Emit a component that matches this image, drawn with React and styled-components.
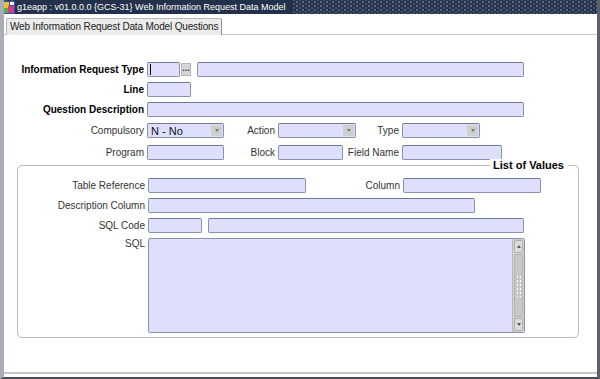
import React from 'react';
import styled, { createGlobalStyle } from 'styled-components';

const GlobalStyle = createGlobalStyle`
  body {
    margin: 0;
    background: #ffffff;
    font-family: "Liberation Sans", Arial, sans-serif;
    font-size: 10px;
    color: #000;
  }
`;

// Window frame
const Window = styled.div`
  width: 600px;
  height: 379px;
  box-sizing: border-box;
  display: flex;
  flex-direction: column;
  background: #fff;
  border-left: 4px solid #a9adb6;
  border-right: 3px solid #5d6068;
  border-bottom: 2px solid #4a4d55;
  overflow: hidden;
`;

const TitleBar = styled.div`
  height: 14px;
  margin-left: -4px;
  margin-right: -3px;
  display: flex;
  align-items: center;
  background-color: #23314a;
  background-image:
    radial-gradient(circle, #5f6f88 0.7px, transparent 0.9px),
    radial-gradient(circle, #4b5a72 0.7px, transparent 0.9px);
  background-size: 6px 4px, 6px 4px;
  background-position: 0 0, 3px 2px;
`;

const TitleText = styled.span`
  background: #23314a;
  color: #ffffff;
  font-size: 9px;
  line-height: 14px;
  padding: 0 6px 0 2px;
  white-space: nowrap;
`;

const AppIcon = styled.svg`
  width: 13px;
  height: 13px;
  margin-left: 2px;
  flex: none;
`;

const TabStrip = styled.div`
  height: 20px;
  display: flex;
  align-items: flex-end;
  padding-left: 2px;
  border-bottom: 1px solid #c9c9c9;
`;

const Tab = styled.div`
  height: 16px;
  line-height: 16px;
  padding: 0 3px 0 3px;
  background: #ececec;
  border: 1px solid #b8b8b8;
  border-bottom: none;
  border-right: 1px solid #8e8e8e;
  font-size: 10px;
  letter-spacing: -0.15px;
  color: #222;
  margin-bottom: -1px;
  border-radius: 2px 2px 0 0;
`;

const Panel = styled.div`
  flex: 1;
  display: flex;
  flex-direction: column;
  padding-top: 27px;
  border-bottom: 2px solid #c6c6c6;
  margin-bottom: 3px;
`;

const Row = styled.div`
  display: flex;
  align-items: center;
  height: 15px;
  margin-top: ${(p) => p.$mt || 0}px;
`;

const Label = styled.span`
  width: ${(p) => p.$w}px;
  flex: none;
  text-align: right;
  padding-right: 3px;
  box-sizing: border-box;
  font-weight: ${(p) => (p.$bold ? 'bold' : 'normal')};
  color: ${(p) => (p.$bold ? '#000' : '#333')};
  white-space: nowrap;
`;

const Field = styled.div`
  width: ${(p) => p.$w}px;
  height: 15px;
  flex: none;
  box-sizing: border-box;
  margin-left: ${(p) => p.$ml || 0}px;
  background: #dedffb;
  border: 1px solid #8a93ad;
  border-top-color: #6f7a96;
  border-radius: 2px;
  display: flex;
  align-items: center;
  font-size: 11px;
  padding-left: 3px;
  color: #111;
  position: relative;
`;

const Caret = styled.span`
  width: 1px;
  height: 11px;
  background: #000;
  margin-left: -1px;
`;

const LovButton = styled.div`
  width: 10px;
  height: 13px;
  margin-left: 1px;
  background: #d6d6d6;
  border: 1px solid #b4b4b4;
  box-sizing: border-box;
  font-size: 9px;
  line-height: 8px;
  text-align: center;
  font-weight: bold;
  color: #333;
`;

const DropButton = styled.div`
  position: absolute;
  right: 1px;
  top: 1px;
  width: 11px;
  height: 11px;
  background: #cfcfcf;
  border-radius: 1px;
  display: flex;
  align-items: center;
  justify-content: center;
  &::after {
    content: '';
    border-left: 2.5px solid transparent;
    border-right: 2.5px solid transparent;
    border-top: 3px solid #777;
  }
`;

const GroupBox = styled.div`
  position: relative;
  margin: 5px 18px 0 13px;
  height: 173px;
  box-sizing: border-box;
  border: 1px solid #bcbcbc;
  border-radius: 5px;
  padding-top: 12px;
  display: flex;
  flex-direction: column;
`;

const Legend = styled.span`
  position: absolute;
  top: -7px;
  right: 10px;
  background: #fff;
  padding: 0 4px 0 3px;
  font-weight: bold;
  font-size: 11px;
  line-height: 12px;
`;

const SqlRow = styled.div`
  display: flex;
  align-items: flex-start;
  margin-top: 5px;
`;

const SqlArea = styled.div`
  width: 377px;
  height: 95px;
  box-sizing: border-box;
  background: #dedffb;
  border: 1px solid #8a93ad;
  border-radius: 2px;
  display: flex;
  justify-content: flex-end;
`;

const ScrollBar = styled.div`
  width: 12px;
  display: flex;
  flex-direction: column;
  background: #d2d2d2;
  border-left: 1px solid #b9b9b9;
  padding: 1px 0;
  box-sizing: border-box;
`;

const ScrollBtn = styled.div`
  height: 11px;
  display: flex;
  align-items: center;
  justify-content: center;
  background: #dcdcdc;
  border: 1px solid #b0b0b0;
  border-radius: 2px;
  margin: 0 1px;
  &::after {
    content: '';
    border-left: 2.5px solid transparent;
    border-right: 2.5px solid transparent;
    ${(p) => (p.$up ? 'border-bottom: 3px solid #555;' : 'border-top: 3px solid #555;')}
  }
`;

const Thumb = styled.div`
  flex: 1;
  margin: 1px 1px;
  background: #c8c8c8;
  border: 1px solid #b5b5b5;
  border-radius: 2px;
  display: flex;
  align-items: center;
  justify-content: center;
`;

const Grip = styled.div`
  width: 5px;
  height: 22px;
  background-image: radial-gradient(circle, #ffffff 0.8px, transparent 1px);
  background-size: 3px 4px;
`;

const Select = ({ w, ml, value }) => (
  <Field $w={w} $ml={ml}>
    {value}
    <DropButton />
  </Field>
);

export default function App() {
  return (
    <>
      <GlobalStyle />
      <Window>
        <TitleBar>
          <AppIcon viewBox="0 0 13 13">
            <rect x="0" y="0" width="13" height="13" fill="#3a56a8" />
            <rect x="1" y="1" width="6" height="6" fill="#e8c02a" />
            <rect x="6" y="5" width="6" height="7" fill="#d43a8c" />
            <rect x="2" y="7" width="4" height="5" fill="#4cb050" />
            <rect x="8" y="1" width="4" height="3" fill="#f0f0f0" />
          </AppIcon>
          <TitleText>g1eapp : v01.0.0.0 {'{GCS-31}'} Web Information Request Data Model</TitleText>
        </TitleBar>
        <TabStrip>
          <Tab>Web Information Request Data Model Questions</Tab>
        </TabStrip>
        <Panel>
          <Row>
            <Label $w={143} $bold>Information Request Type</Label>
            <Field $w={33}><Caret /></Field>
            <LovButton>...</LovButton>
            <Field $w={327} $ml={6} />
          </Row>
          <Row $mt={5}>
            <Label $w={143} $bold>Line</Label>
            <Field $w={44} />
          </Row>
          <Row $mt={5}>
            <Label $w={143} $bold>Question Description</Label>
            <Field $w={377} />
          </Row>
          <Row $mt={6}>
            <Label $w={143}>Compulsory</Label>
            <Select w={77} value="N - No" />
            <Label $w={54}>Action</Label>
            <Select w={78} />
            <Label $w={46}>Type</Label>
            <Select w={78} />
          </Row>
          <Row $mt={7}>
            <Label $w={143}>Program</Label>
            <Field $w={77} />
            <Label $w={54}>Block</Label>
            <Field $w={65} />
            <Label $w={59}>Field Name</Label>
            <Field $w={100} />
          </Row>
          <GroupBox>
            <Legend>List of Values</Legend>
            <Row>
              <Label $w={130}>Table Reference</Label>
              <Field $w={158} />
              <Label $w={97}>Column</Label>
              <Field $w={138} />
            </Row>
            <Row $mt={5}>
              <Label $w={130}>Description Column</Label>
              <Field $w={327} />
            </Row>
            <Row $mt={5}>
              <Label $w={130}>SQL Code</Label>
              <Field $w={54} />
              <Field $w={316} $ml={6} />
            </Row>
            <SqlRow>
              <Label $w={130}>SQL</Label>
              <SqlArea>
                <ScrollBar>
                  <ScrollBtn $up />
                  <Thumb>
                    <Grip />
                  </Thumb>
                  <ScrollBtn />
                </ScrollBar>
              </SqlArea>
            </SqlRow>
          </GroupBox>
        </Panel>
      </Window>
    </>
  );
}
